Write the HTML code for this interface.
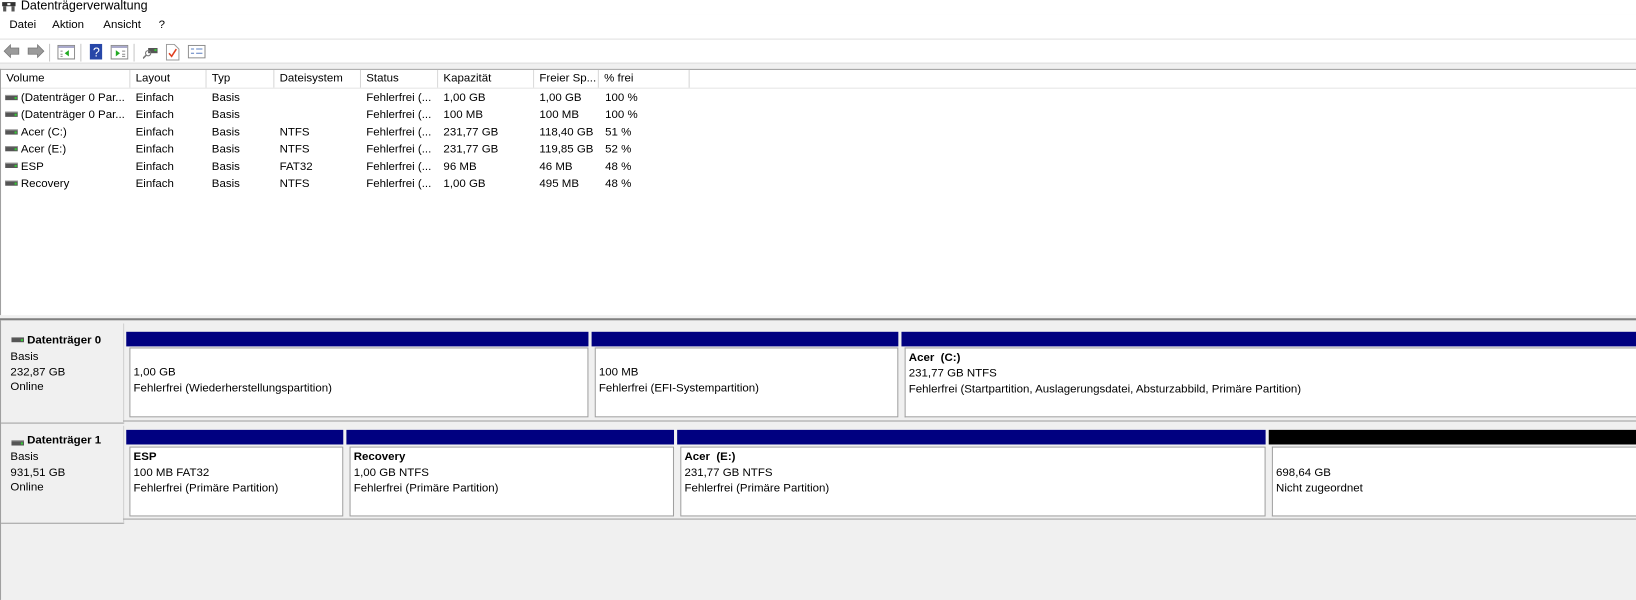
<!DOCTYPE html>
<html><head><meta charset="utf-8">
<style>
html,body{margin:0;padding:0;width:1636px;height:600px;overflow:hidden;background:#f0f0f0;}
#w{position:absolute;left:0;top:0;width:1568px;height:575px;transform:scale(1.04337);transform-origin:0 0;font-family:"Liberation Sans",sans-serif;font-size:11px;color:#000;background:#f0f0f0;}
.a{position:absolute;white-space:nowrap;}
.b{font-weight:bold;}
.hd{position:absolute;top:67px;height:17px;line-height:17px;border-right:1px solid #d5d5d5;box-sizing:border-box;padding-left:5px;background:#fff;}
.dk{position:absolute;width:12px;height:4px;background:#555;border-top:1px solid #999;}
.dk:after{content:"";position:absolute;right:1px;top:1px;width:2px;height:2px;background:#3c3;}
.bar{position:absolute;height:14px;background:#000080;}
.pc{position:absolute;background:#fff;border:1px solid #a0a0a0;box-sizing:border-box;}
.sep{position:absolute;top:42px;width:1px;height:17px;background:#c8c8c8;}
</style></head><body><div id="w">
<div class="a" style="left:0;top:0;width:1568px;height:14px;background:#fff"></div>
<svg class="a" style="left:2px;top:1px" width="13" height="11"><rect x="0" y="1" width="13" height="4" fill="#333"/><rect x="1" y="5" width="3" height="5" fill="#555"/><rect x="9" y="5" width="3" height="5" fill="#555"/><rect x="5" y="2" width="3" height="2" fill="#fff"/></svg>
<div class="a" style="left:20px;top:-2px;font-size:12px">Datenträgerverwaltung</div>
<div class="a" style="left:0;top:14px;width:1568px;height:24px;background:#fff"></div>
<div class="a" style="left:9px;top:18px">Datei</div>
<div class="a" style="left:50px;top:18px">Aktion</div>
<div class="a" style="left:99px;top:18px">Ansicht</div>
<div class="a" style="left:152px;top:18px">?</div>
<div class="a" style="left:0;top:37px;width:1568px;height:1px;background:#ddd"></div>
<div class="a" style="left:0;top:38px;width:1568px;height:22px;background:#fff"></div>
<svg class="a" style="left:3px;top:42px" width="40" height="14"><path d="M1 7 L7 1 V4 H15 V10 H7 V13 Z" fill="#9a9a9a" stroke="#777" stroke-width="0.8"/><path d="M39 7 L33 1 V4 H24 V10 H33 V13 Z" fill="#9a9a9a" stroke="#777" stroke-width="0.8"/></svg>
<div class="sep" style="left:47px"></div>
<svg class="a" style="left:55px;top:43px" width="17" height="14"><rect x="0.5" y="0.5" width="16" height="13" fill="#fff" stroke="#888"/><rect x="1" y="1" width="15" height="2" fill="#aac"/><path d="M11 5 L7 8 L11 11Z" fill="#2a2"/><path d="M3 6H5M3 9H5M3 11H5" stroke="#888"/></svg>
<div class="sep" style="left:77px"></div>
<svg class="a" style="left:86px;top:42px" width="12" height="15"><rect width="12" height="15" fill="#2747a8"/><text x="3" y="12" font-size="12" fill="#fff" font-family="Liberation Sans">?</text></svg>
<svg class="a" style="left:106px;top:43px" width="17" height="14"><rect x="0.5" y="0.5" width="16" height="13" fill="#fff" stroke="#888"/><rect x="1" y="1" width="15" height="2" fill="#aac"/><path d="M5 5 L9 8 L5 11Z" fill="#2a2"/><path d="M11 6H14M11 9H14M11 11H14" stroke="#888"/></svg>
<div class="sep" style="left:128px"></div>
<svg class="a" style="left:137px;top:43px" width="15" height="14"><rect x="5" y="3" width="9" height="5" fill="#555"/><rect x="11" y="4" width="2" height="2" fill="#3c3"/><circle cx="5" cy="8" r="2.5" fill="none" stroke="#777"/><path d="M3 10 L0 13" stroke="#777" stroke-width="1.5"/></svg>
<svg class="a" style="left:159px;top:42px" width="13" height="16"><path d="M0.5 0.5H8L12.5 5V15.5H0.5Z" fill="#fff" stroke="#999"/><path d="M3 9 L5.5 12 L10 5" stroke="#e04020" stroke-width="1.5" fill="none"/></svg>
<svg class="a" style="left:180px;top:43px" width="17" height="13"><rect x="0.5" y="0.5" width="16" height="12" fill="#fff" stroke="#888"/><path d="M3 4H6M3 8H6M8 4H14M8 8H14" stroke="#5a7fc0"/></svg>
<div class="a" style="left:0;top:60px;width:1568px;height:1px;background:#ddd"></div>
<div class="a" style="left:0;top:66px;width:1568px;height:236px;background:#fff;border-top:1px solid #a0a0a0;border-left:1px solid #a0a0a0;box-sizing:border-box"></div>
<div class="hd" style="left:1px;width:124px">Volume</div>
<div class="hd" style="left:125px;width:73px">Layout</div>
<div class="hd" style="left:198px;width:65px">Typ</div>
<div class="hd" style="left:263px;width:83px">Dateisystem</div>
<div class="hd" style="left:346px;width:74px">Status</div>
<div class="hd" style="left:420px;width:92px">Kapazität</div>
<div class="hd" style="left:512px;width:62px">Freier Sp...</div>
<div class="hd" style="left:574px;width:87px">% frei</div>
<div class="a" style="left:1px;top:84px;width:1567px;height:1px;background:#e5e5e5"></div>
<div class="a" style="left:0;top:85px">
<div style="position:relative">
<div class="dk" style="left:5px;top:6px"></div>
<div class="dk" style="left:5px;top:22px"></div>
<div class="dk" style="left:5px;top:39px"></div>
<div class="dk" style="left:5px;top:55px"></div>
<div class="dk" style="left:5px;top:71px"></div>
<div class="dk" style="left:5px;top:88px"></div>
<div class="a" style="left:20px;top:1px;line-height:16.4px">(Datenträger 0 Par...<br>(Datenträger 0 Par...<br>Acer (C:)<br>Acer (E:)<br>ESP<br>Recovery</div>
<div class="a" style="left:130px;top:1px;line-height:16.4px">Einfach<br>Einfach<br>Einfach<br>Einfach<br>Einfach<br>Einfach</div>
<div class="a" style="left:203px;top:1px;line-height:16.4px">Basis<br>Basis<br>Basis<br>Basis<br>Basis<br>Basis</div>
<div class="a" style="left:268px;top:1px;line-height:16.4px">&nbsp;<br>&nbsp;<br>NTFS<br>NTFS<br>FAT32<br>NTFS</div>
<div class="a" style="left:351px;top:1px;line-height:16.4px">Fehlerfrei (...<br>Fehlerfrei (...<br>Fehlerfrei (...<br>Fehlerfrei (...<br>Fehlerfrei (...<br>Fehlerfrei (...</div>
<div class="a" style="left:425px;top:1px;line-height:16.4px">1,00 GB<br>100 MB<br>231,77 GB<br>231,77 GB<br>96 MB<br>1,00 GB</div>
<div class="a" style="left:517px;top:1px;line-height:16.4px">1,00 GB<br>100 MB<br>118,40 GB<br>119,85 GB<br>46 MB<br>495 MB</div>
<div class="a" style="left:580px;top:1px;line-height:16.4px">100 %<br>100 %<br>51 %<br>52 %<br>48 %<br>48 %</div>
</div></div>
<div class="a" style="left:0;top:305px;width:1568px;height:2px;background:#808080"></div>
<div class="a" style="left:0;top:307px;width:1px;height:268px;background:#a0a0a0"></div>
<div class="a" style="left:1px;top:310px;width:117px;height:95px;border-right:1px solid #d0d0d0;border-bottom:1px solid #a0a0a0"></div>
<div class="dk" style="left:11px;top:323px"></div>
<div class="a b" style="left:26px;top:320px">Datenträger 0</div>
<div class="a" style="left:10px;top:335px;line-height:14.5px">Basis<br>232,87 GB<br>Online</div>
<div class="bar" style="left:121px;top:318px;width:443px"></div>
<div class="bar" style="left:567px;top:318px;width:294px"></div>
<div class="bar" style="left:864px;top:318px;width:704px"></div>
<div class="pc" style="left:124px;top:333px;width:440px;height:67px"></div>
<div class="pc" style="left:570px;top:333px;width:291px;height:67px"></div>
<div class="pc" style="left:867px;top:333px;width:701px;height:67px;border-right:none"></div>
<div class="a" style="left:128px;top:350px;line-height:15px">1,00 GB<br>Fehlerfrei (Wiederherstellungspartition)</div>
<div class="a" style="left:574px;top:350px;line-height:15px">100 MB<br>Fehlerfrei (EFI-Systempartition)</div>
<div class="a" style="left:871px;top:336px;line-height:15px"><b>Acer &nbsp;(C:)</b><br>231,77 GB NTFS<br>Fehlerfrei (Startpartition, Auslagerungsdatei, Absturzabbild, Primäre Partition)</div>
<div class="a" style="left:118px;top:403px;width:1450px;height:1px;background:#a0a0a0"></div>
<div class="a" style="left:1px;top:408px;width:117px;height:93px;border-right:1px solid #d0d0d0;border-bottom:1px solid #a0a0a0"></div>
<div class="dk" style="left:11px;top:422px"></div>
<div class="a b" style="left:26px;top:416px">Datenträger 1</div>
<div class="a" style="left:10px;top:431px;line-height:14.5px">Basis<br>931,51 GB<br>Online</div>
<div class="bar" style="left:121px;top:412px;width:208px"></div>
<div class="bar" style="left:332px;top:412px;width:314px"></div>
<div class="bar" style="left:649px;top:412px;width:564px"></div>
<div class="bar" style="left:1216px;top:412px;width:352px;background:#000"></div>
<div class="pc" style="left:124px;top:428px;width:205px;height:67px"></div>
<div class="pc" style="left:335px;top:428px;width:311px;height:67px"></div>
<div class="pc" style="left:652px;top:428px;width:561px;height:67px"></div>
<div class="pc" style="left:1219px;top:428px;width:349px;height:67px;border-right:none"></div>
<div class="a" style="left:128px;top:431px;line-height:15px"><b>ESP</b><br>100 MB FAT32<br>Fehlerfrei (Primäre Partition)</div>
<div class="a" style="left:339px;top:431px;line-height:15px"><b>Recovery</b><br>1,00 GB NTFS<br>Fehlerfrei (Primäre Partition)</div>
<div class="a" style="left:656px;top:431px;line-height:15px"><b>Acer &nbsp;(E:)</b><br>231,77 GB NTFS<br>Fehlerfrei (Primäre Partition)</div>
<div class="a" style="left:1223px;top:446px;line-height:15px">698,64 GB<br>Nicht zugeordnet</div>
<div class="a" style="left:118px;top:497px;width:1450px;height:1px;background:#a0a0a0"></div>
</div></body></html>
